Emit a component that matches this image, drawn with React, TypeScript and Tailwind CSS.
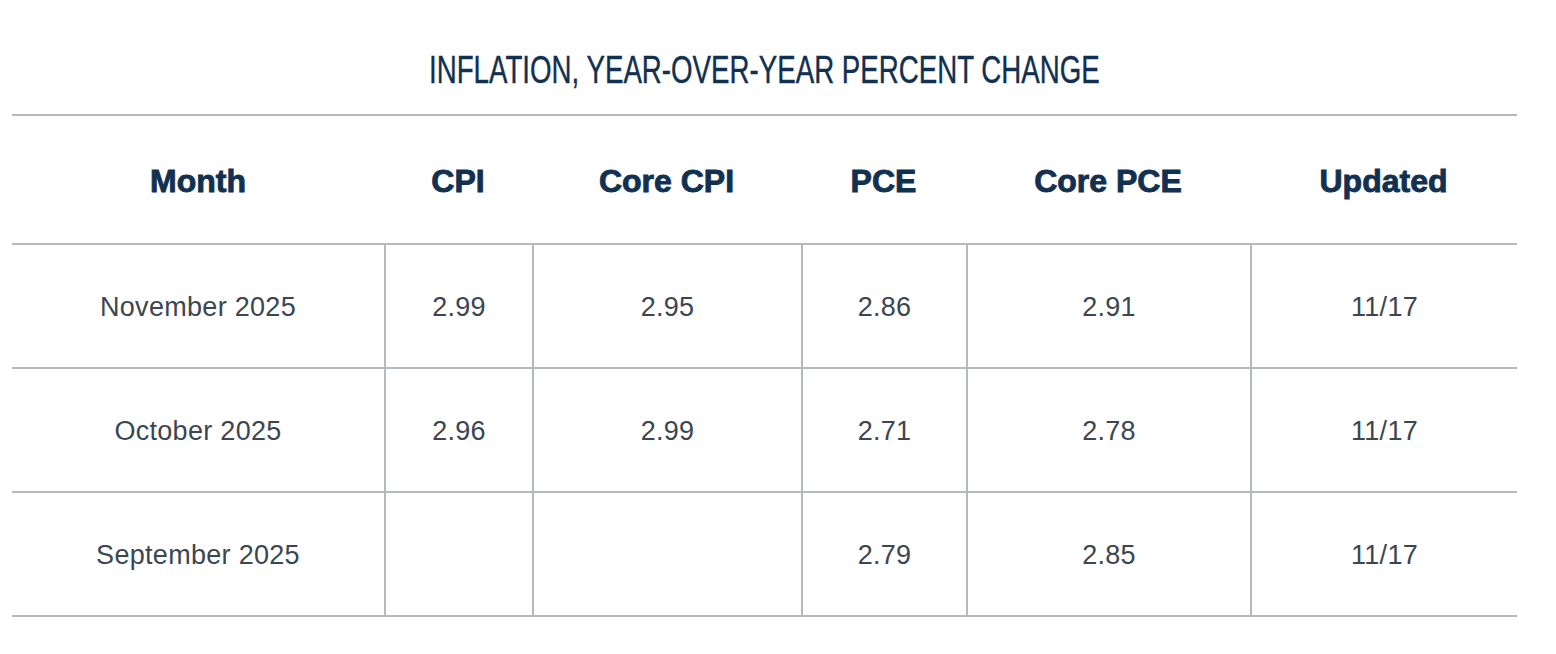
const rows = [
  { month: "November 2025", cpi: "2.99", coreCpi: "2.95", pce: "2.86", corePce: "2.91", updated: "11/17" },
  { month: "October 2025", cpi: "2.96", coreCpi: "2.99", pce: "2.71", corePce: "2.78", updated: "11/17" },
  { month: "September 2025", cpi: "", coreCpi: "", pce: "2.79", corePce: "2.85", updated: "11/17" },
]

const headers = ["Month", "CPI", "Core CPI", "PCE", "Core PCE", "Updated"]

const cols = "grid grid-cols-[372px_148px_269px_165px_284px_267px]"

export default function App() {
  return (
    <div className="min-h-screen bg-white font-['Liberation_Sans',Arial,sans-serif]">
      <div className="ml-[12px] w-[1505px]">
        <div className="flex h-[114px] justify-center pt-[50px]">
          <h1 className="inline-block scale-x-[0.71] whitespace-nowrap text-[39px] leading-none font-normal text-[#12304f] [-webkit-text-stroke:0.4px_#12304f]">
            INFLATION, YEAR-OVER-YEAR PERCENT CHANGE
          </h1>
        </div>

        <div className={`${cols} h-[131px] border-y-2 border-[#b5b9bd]`}>
          {headers.map((h) => (
            <div
              key={h}
              className="flex items-center justify-center pt-[3px] text-[32px] leading-none font-bold text-[#12304f] [-webkit-text-stroke:0.9px_#12304f]"
            >
              {h}
            </div>
          ))}
        </div>

        {rows.map((r) => {
          const cells = [r.month, r.cpi, r.coreCpi, r.pce, r.corePce, r.updated]
          return (
            <div key={r.month} className={`${cols} h-[124px] border-b-2 border-[#b5b9bd]`}>
              {cells.map((c, i) => (
                <div
                  key={i}
                  className={
                    "flex items-center justify-center pt-[3px] text-[27px] leading-none tracking-[0.3px] text-[#3b4651] " +
                    (i > 0 ? "border-l-2 border-[#b5b9bd]" : "")
                  }
                >
                  {c}
                </div>
              ))}
            </div>
          )
        })}
      </div>
    </div>
  )
}
